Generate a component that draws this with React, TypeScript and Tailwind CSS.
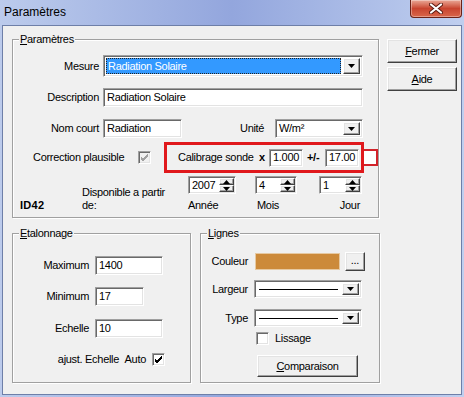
import React from "react";

const sunken =
  "border border-t-[#a0a0a0] border-l-[#a0a0a0] border-b-white border-r-white shadow-[inset_1px_1px_0_#696969,inset_-1px_-1px_0_#e3e3e3]";
const raised =
  "border border-t-white border-l-white border-b-[#404040] border-r-[#404040] shadow-[inset_-1px_-1px_0_#a0a0a0,inset_1px_1px_0_#e3e3e3] bg-[#f0f0f0]";

function Tri({ up = false, w = 7 }: { up?: boolean; w?: number }) {
  const h = Math.ceil(w / 2);
  return (
    <svg width={w} height={h} viewBox={`0 0 ${w} ${h}`}>
      <polygon points={up ? `0,${h} ${w},${h} ${w / 2},0` : `0,0 ${w},0 ${w / 2},${h}`} fill="#000" />
    </svg>
  );
}

function DropBtn() {
  return (
    <div className={`${raised} w-[17px] shrink-0 flex items-center justify-center`}>
      <Tri />
    </div>
  );
}

function Field({ className = "", children }: { className?: string; children?: React.ReactNode }) {
  return (
    <div className={`${sunken} bg-white flex items-center pl-[3px] overflow-hidden whitespace-nowrap ${className}`}>
      {children}
    </div>
  );
}

function Combo({ className = "", children }: { className?: string; children?: React.ReactNode }) {
  return (
    <div className={`${sunken} bg-white flex items-stretch p-[2px] ${className}`}>
      <div className="flex-1 flex items-center min-w-0 whitespace-nowrap">{children}</div>
      <DropBtn />
    </div>
  );
}

function Spin({ className = "", value }: { className?: string; value: string }) {
  return (
    <div className={`${sunken} bg-white flex items-stretch p-[1px] ${className}`}>
      <div className="flex-1 flex items-center pl-[2px]">{value}</div>
      <div className="w-[15px] flex flex-col">
        <div className={`${raised} flex-1 flex items-center justify-center`}>
          <Tri up w={7} />
        </div>
        <div className={`${raised} flex-1 flex items-center justify-center`}>
          <Tri w={7} />
        </div>
      </div>
    </div>
  );
}

function Check({ checked = false, disabled = false }: { checked?: boolean; disabled?: boolean }) {
  return (
    <div
      className={`${sunken} w-[13px] h-[13px] shrink-0 flex items-center justify-center ${
        disabled ? "bg-[#f0f0f0]" : "bg-white"
      }`}
    >
      {checked && (
        <svg width="9" height="9" viewBox="0 0 9 9">
          <path d="M1 4 L3 6 L8 1 M1 5 L3 7 L8 2 M1 6 L3 8 L8 3" stroke={disabled ? "#a0a0a0" : "#000"} strokeWidth="1" fill="none" />
        </svg>
      )}
    </div>
  );
}

function Group({ label, rest, className = "", children }: { label: string; rest: string; className?: string; children?: React.ReactNode }) {
  return (
    <div className={`relative border border-[#a0a0a0] shadow-[inset_1px_1px_0_#fff,1px_1px_0_#fff] ${className}`}>
      <span className="absolute left-[6px] -top-[7px] bg-[#f0f0f0] px-[1px] leading-[13px]">
        <span className="underline">{label}</span>
        {rest}
      </span>
      {children}
    </div>
  );
}

function LineCombo() {
  return (
    <Combo className="w-[108px] h-[18px]">
      <div className="flex-1 h-[1px] bg-black ml-[2px] mr-[4px]" />
    </Combo>
  );
}

export default function App() {
  return (
    <div className="w-[464px] h-[397px] overflow-hidden bg-linear-to-r from-[#bccbec] via-[#93a6dd] to-[#c0cfef] font-['Liberation_Sans',Arial,sans-serif] text-[11px] leading-[13px] tracking-[-0.3px] text-black">
      {/* title bar */}
      <div className="h-[25px] flex items-start justify-between">
        <span className="ml-[4px] mt-[5px] text-[12px] leading-[15px] tracking-normal">Paramètres</span>
        <div className="mr-[2px] w-[52px] h-[18px] rounded-b-[4px] border border-t-0 border-[#6b2217] bg-linear-to-b from-[#e9a897] via-[#c8442f] to-[#d9664a] shadow-[inset_0_0_0_1px_rgba(255,255,255,0.35)] flex items-center justify-center">
          <svg width="14" height="11" viewBox="0 0 14 11">
            <path d="M2 1.5 L12 9.5 M12 1.5 L2 9.5" stroke="#5a1a10" strokeWidth="4" strokeLinecap="round" />
            <path d="M2 1.5 L12 9.5 M12 1.5 L2 9.5" stroke="#fff" strokeWidth="2.2" strokeLinecap="round" />
          </svg>
        </div>
      </div>

      {/* client area */}
      <div className="mx-[2px] h-[370px] border border-[#6e7fa8] bg-[#f0f0f0]">
        <div className="flex pl-[9px] pt-[13px]">
          <Group label="P" rest="aramètres" className="w-[367px] h-[179px] flex flex-col">
            <div className="mt-[15px] h-[22px] flex items-center">
              <span className="w-[86px] text-right">Mesure</span>
              <Combo className="ml-[4px] w-[260px] h-[22px]">
                <div className="flex-1 h-full mr-[2px] bg-[#3399ff] border border-dotted border-[#222] text-white flex items-center pl-[1px]">
                  Radiation Solaire
                </div>
              </Combo>
            </div>
            <div className="mt-[11px] h-[19px] flex items-center">
              <span className="w-[86px] text-right">Description</span>
              <Field className="ml-[4px] w-[260px] h-[19px]">Radiation Solaire</Field>
            </div>
            <div className="mt-[12px] h-[19px] flex items-center">
              <span className="w-[86px] text-right">Nom court</span>
              <Field className="ml-[4px] w-[79px] h-[19px]">Radiation</Field>
              <span className="ml-[58px] w-[26px]">Unité</span>
              <Combo className="ml-[9px] w-[88px] h-[19px]">
                <span className="pl-[1px]">W/m²</span>
              </Combo>
            </div>
            <div className="mt-[4px] h-[31px] flex items-center">
              <span className="ml-[20px] w-[105px] whitespace-nowrap">Correction plausible</span>
              <Check checked disabled />
              <div className="ml-[13px] w-[200px] h-[31px] border-[3px] border-[#e0181c] flex items-center pl-[11px]">
                <span className="w-[81px] whitespace-nowrap">Calibrage sonde</span>
                <span className="w-[10px] font-bold">x</span>
                <Field className="w-[34px] h-[18px]">1.000</Field>
                <span className="ml-[4px] w-[18px] font-bold">+/-</span>
                <Field className="w-[34px] h-[18px]">17.00</Field>
              </div>
              <div className="w-[14px] h-[17px] border-2 border-l-0 border-[#d2232a] bg-white" />
            </div>
            <div className="mt-[3px] flex items-start">
              <span className="ml-[7px] w-[62px] mt-[23px] font-bold tracking-[0.3px]">ID42</span>
              <div className="w-[106px] mt-[10px]">
                <div>Disponible a partir</div>
                <div>de:</div>
              </div>
              <div className="w-[67px] flex flex-col">
                <Spin className="w-[48px] h-[18px]" value="2007" />
                <span className="mt-[5px]">Année</span>
              </div>
              <div className="w-[64px] flex flex-col">
                <Spin className="w-[42px] h-[18px]" value="4" />
                <span className="mt-[5px] ml-[2px]">Mois</span>
              </div>
              <div className="w-[43px] flex flex-col">
                <Spin className="w-[43px] h-[18px]" value="1" />
                <span className="mt-[5px] text-right pr-[2px]">Jour</span>
              </div>
            </div>
          </Group>

          <div className="ml-[8px] w-[70px] flex flex-col gap-[4px]">
            <button className={`${raised} h-[24px] w-[70px]`}>
              <span className="underline">F</span>ermer
            </button>
            <button className={`${raised} h-[24px] w-[70px]`}>
              <span className="underline">A</span>ide
            </button>
          </div>
        </div>

        <div className="flex pl-[9px] mt-[15px]">
          <Group label="E" rest="talonnage" className="w-[179px] h-[150px] flex flex-col">
            <div className="mt-[22px] h-[19px] flex items-center">
              <span className="w-[76px] text-right">Maximum</span>
              <Field className="ml-[6px] w-[68px] h-[19px]">1400</Field>
            </div>
            <div className="mt-[12px] h-[19px] flex items-center">
              <span className="w-[76px] text-right">Minimum</span>
              <Field className="ml-[6px] w-[49px] h-[19px]">17</Field>
            </div>
            <div className="mt-[13px] h-[19px] flex items-center">
              <span className="w-[76px] text-right">Echelle</span>
              <Field className="ml-[6px] w-[68px] h-[19px]">10</Field>
            </div>
            <div className="mt-[15px] h-[13px] flex items-center">
              <span className="w-[133px] text-right whitespace-nowrap">ajust. Echelle&nbsp;&nbsp;Auto</span>
              <div className="ml-[6px]">
                <Check checked />
              </div>
            </div>
          </Group>

          <Group label="L" rest="ignes" className="ml-[9px] w-[180px] h-[150px] flex flex-col">
            <div className="mt-[18px] h-[19px] flex items-center">
              <span className="w-[47px] text-right">Couleur</span>
              <div className="ml-[7px] w-[85px] h-[17px] bg-[#cc8a3a] border border-[#e6c9a2]" />
              <button className={`${raised} ml-[5px] w-[20px] h-[19px] leading-[10px] pb-[3px]`}>...</button>
            </div>
            <div className="mt-[9px] h-[18px] flex items-center">
              <span className="w-[47px] text-right">Largeur</span>
              <div className="ml-[6px]">
                <LineCombo />
              </div>
            </div>
            <div className="mt-[11px] h-[18px] flex items-center">
              <span className="w-[47px] text-right">Type</span>
              <div className="ml-[6px]">
                <LineCombo />
              </div>
            </div>
            <div className="mt-[5px] h-[13px] flex items-center">
              <div className="ml-[55px]">
                <Check />
              </div>
              <span className="ml-[6px]">Lissage</span>
            </div>
            <button className={`${raised} mt-[10px] ml-[56px] w-[101px] h-[22px]`}>
              <span className="underline">C</span>omparaison
            </button>
          </Group>
        </div>
      </div>
    </div>
  );
}
